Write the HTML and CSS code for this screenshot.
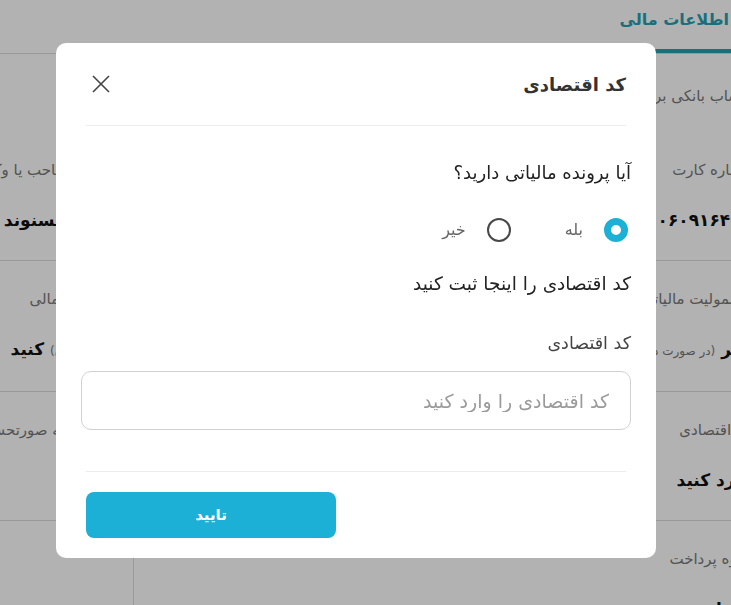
FILE: index.html
```html
<!DOCTYPE html>
<html lang="fa" dir="rtl">
<head>
<meta charset="utf-8">
<title>کد اقتصادی</title>
<link rel="stylesheet" href="styles.css">
</head>
<body>
<div class="Page">
    <div class="Tabs"><span class="Tab">اطلاعات مالی</span></div>
    <div class="Section">حساب بانکی برای واریز</div>

    <div class="Row first">
        <div class="Cell"><div class="Label">شماره کارت</div><div class="Value">۶۰۳۷۹۹۷۰۰۶۰۹۱۶۴۱۹</div></div>
        <div class="Cell"><div class="Label">شماره شبا</div><div class="Value">IR۰۶۰۱۷۰۰۰۰۰</div></div>
        <div class="Cell"><div class="Label">نام دارنده صاحب یا وکیل</div><div class="Value">امیر حسنوند</div></div>
    </div>
    <div class="Row">
        <div class="Cell"><div class="Label">مشمولیت مالیاتی</div><div class="Value">خیر <small>(در صورت داشتن پرونده)</small></div></div>
        <div class="Cell"><div class="Label">نوع قرارداد</div><div class="Value">حق التالیف</div></div>
        <div class="Cell"><div class="Label">نوع قرارداد مالی</div><div class="Value"><small>(پس از آن)</small> کنید</div></div>
    </div>
    <div class="Row">
        <div class="Cell"><div class="Label">کد اقتصادی</div><div class="Value">وارد کنید</div></div>
        <div class="Cell"><div class="Label">درصد کسر</div><div class="Value">۱۰ درصد</div></div>
        <div class="Cell"><div class="Label">نحوه محاسبه صورتحساب</div><div class="Value">۵</div></div>
    </div>
    <div class="Row">
        <div class="Cell"><div class="Label">نحوه پرداخت</div><div class="Value">ماهانه</div></div>
        <div class="Cell"></div>
        <div class="Cell edge"></div>
    </div>
</div>

<div class="Overlay">
    <div class="Modal">
        <div class="ModalHead">
            <div class="ModalTitle">کد اقتصادی</div>
            <button class="Close" type="button">
                <svg width="18" height="18" viewBox="0 0 18 18"><path d="M1 1L17 17M17 1L1 17" stroke="#444" stroke-width="1.6" fill="none"/></svg>
            </button>
        </div>
        <div class="ModalBody">
            <p class="Question">آیا پرونده مالیاتی دارید؟</p>
            <div class="Radios">
                <label class="Choice"><input type="radio" name="tax" class="Radio" checked><span>بله</span></label>
                <label class="Choice"><input type="radio" name="tax" class="Radio"><span>خیر</span></label>
            </div>
            <p class="Hint">کد اقتصادی را اینجا ثبت کنید</p>
            <div class="FieldLabel">کد اقتصادی</div>
            <input type="text" class="Field" placeholder="کد اقتصادی را وارد کنید">
        </div>
        <div class="ModalFoot">
            <button class="Submit" type="button">تایید</button>
        </div>
    </div>
</div>
</body>
</html>
```

FILE: styles.css
```css
* { box-sizing: border-box; }
html, body { margin: 0; height: 100%; overflow: hidden; }
body { font-family: "DejaVu Sans", sans-serif; background: #fff; color: #222; }

/* page behind the dialog */
.Page { margin-right: -20px; white-space: nowrap; }
.Tabs { display: flex; height: 54px; border-bottom: 1px solid #dcdcdc; }
.Tab { height: 53px; padding: 7px 22px 0 30px; border-bottom: 4px solid #279fb4; color: #279fb4; font-size: 16px; font-weight: bold; line-height: 26px; }
.Section { padding-top: 30px; color: #777; font-size: 15px; line-height: 24px; }
.Row { display: grid; grid-template-columns: 1fr 1fr 134px; border-bottom: 1px solid #dcdcdc; }
.Cell { padding: 26px 0 26px 0; }
.Row.first .Cell { padding-top: 50px; }
.Cell:last-child .Value { padding-right: 27px; }
.Cell.edge { border-right: 1px solid #dcdcdc; }
.Label { color: #777; font-size: 15px; line-height: 24px; }
.Value { margin-top: 24px; color: #111; font-size: 17px; font-weight: bold; line-height: 28px; }
.Value small { color: #777; font-size: 12px; font-weight: normal; }

/* dialog */
.Overlay { position: fixed; inset: 0; display: flex; align-items: flex-start; padding: 43px 75px 0 56px; background: rgba(0, 0, 0, .3); }
.Modal { display: flex; flex-direction: column; width: 600px; height: 515px; background: #fff; border-radius: 10px; }
.ModalHead { display: flex; align-items: center; justify-content: space-between; height: 83px; margin: 0 30px; border-bottom: 1px solid #ececec; }
.ModalTitle { color: #333; font-size: 18px; font-weight: bold; }
.Close { display: flex; align-items: center; justify-content: center; width: 30px; height: 30px; padding: 0; border: 0; background: none; }
.ModalBody { padding: 0 25px; }
.Question { margin: 34px 0 0; font-size: 18px; line-height: 26px; }
.Radios { display: flex; gap: 54px; margin-top: 32px; padding-right: 3px; }
.Choice { display: flex; align-items: center; gap: 21px; color: #666; font-size: 16px; line-height: 24px; }
.Radio { appearance: none; width: 24px; height: 24px; margin: 0; border: 2.5px solid #484848; border-radius: 50%; background: #fff; }
.Radio:checked { border: 7px solid #1cb0d6; }
.Hint { margin: 29px 0 0; font-size: 18.5px; line-height: 26px; }
.FieldLabel { margin-top: 34px; color: #444; font-size: 17.5px; line-height: 24px; }
.Field { width: 100%; height: 59px; margin-top: 16px; padding: 0 21px; border: 1px solid #d0d0d0; border-radius: 10px; font-family: inherit; font-size: 19px; }
.Field::placeholder { color: #9a9a9a; }
.ModalFoot { display: flex; justify-content: flex-end; margin: 41px 30px 0; padding-top: 20px; border-top: 1px solid #ececec; }
.Submit { width: 250px; height: 46px; border: 0; border-radius: 8px; background: #1cb0d6; color: #fff; font-family: inherit; font-size: 15px; font-weight: bold; }
```
